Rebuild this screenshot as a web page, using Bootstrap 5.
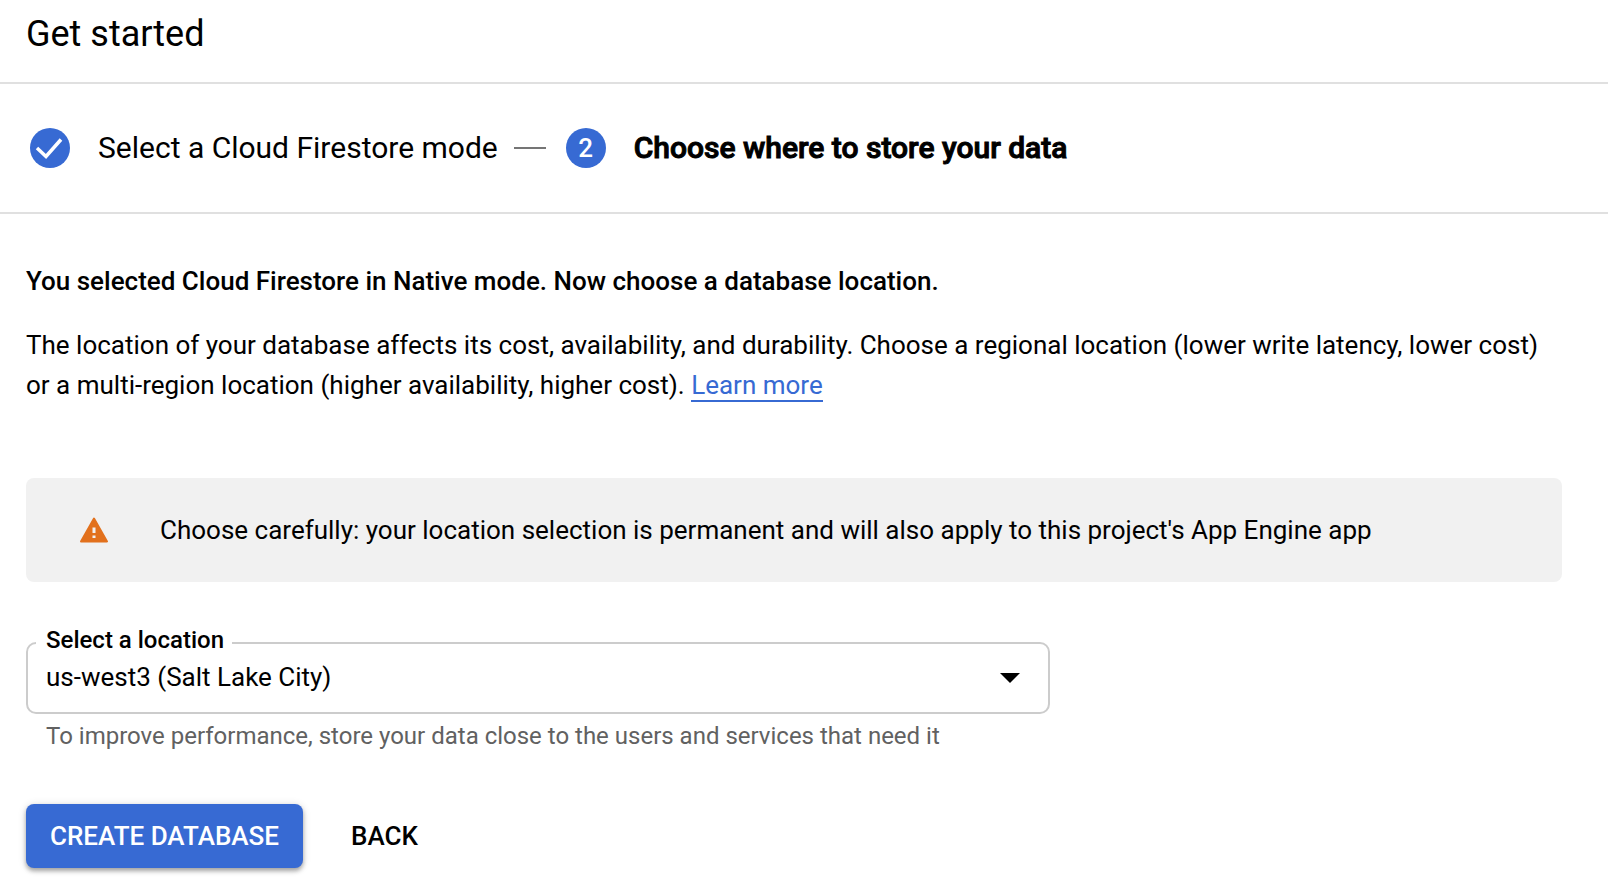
<!DOCTYPE html>
<html lang="en">
<head>
<meta charset="utf-8">
<meta name="viewport" content="width=device-width, initial-scale=1">
<title>Get started</title>
<link href="https://cdn.jsdelivr.net/npm/bootstrap@5.3.0/dist/css/bootstrap.min.css" rel="stylesheet">
<style>
  :root { --brand: #376ad3; --rule: #e0e0e0; }
  body { font-family: Roboto, "Liberation Sans", sans-serif; font-size: 26px; line-height: 40px; color: #000; background: #fff; }
  .rule-bottom { border-bottom: 2px solid var(--rule); }
  .page-x { padding-left: 26px; padding-right: 46px; }
  .page-title { font-size: 36px; line-height: 40px; padding-top: 14px; padding-bottom: 28px; }
  .stepper { padding-top: 44px; padding-bottom: 44px; padding-left: 30px; font-size: 30px; }
  .step-dot { width: 40px; height: 40px; flex: none; border-radius: 50%; background: var(--brand); color: #fff; font-size: 26px; font-weight: 500; }
  .step-label { margin-left: 28px; }
  .step-current { font-weight: 500; -webkit-text-stroke: 1px #000; }
  .step-link { width: 32px; height: 2px; background: #757575; margin-left: 16px; margin-right: 20px; }
  .intro { padding-top: 47px; }
  .intro-title { font-size: 26px; line-height: 40px; font-weight: 500; margin-bottom: 24px; }
  .more-link { color: var(--brand); text-decoration: none; border-bottom: 2px solid var(--brand); }
  .notice { background: #f1f1f1; border-radius: 8px; padding: 32px 54px; margin-top: 73px; margin-bottom: 60px; gap: 52px; }
  .notice svg { width: 28px; height: 26px; flex: none; }
  .location-label { position: absolute; left: 10px; top: -18px; padding: 0 8px 0 10px; background: #fff; font-size: 24px; line-height: 32px; font-weight: 500; }
  .location-select { height: 72px; border: 2px solid #ccc; border-radius: 10px; padding: 0 64px 2px 18px; font-size: 26px; line-height: 40px; color: #000;
    background-color: #fff; background-position: right 28px center; background-size: 20px 10px;
    background-image: url("data:image/svg+xml,%3Csvg xmlns='http://www.w3.org/2000/svg' viewBox='0 0 20 10'%3E%3Cpath d='M0 0h20L10 10z'/%3E%3C/svg%3E"); }
  .helper { font-size: 24px; line-height: 32px; color: #616161; padding-left: 20px; margin-top: 6px; }
  .actions { margin-top: 52px; padding-bottom: 28px; gap: 24px; }
  .action-btn { font-size: 26px; line-height: 40px; font-weight: 500; padding: 12px 24px; border: 0; border-radius: 8px; color: #000; }
  .action-main, .action-main:hover { color: #fff; background: var(--brand); box-shadow: 0 3px 4px rgba(0,0,0,.3), 0 1px 8px rgba(0,0,0,.14); }
</style>
</head>
<body>
<header class="rule-bottom">
  <h1 class="page-title page-x fw-normal m-0">Get started</h1>
</header>
<nav class="rule-bottom" aria-label="Progress">
  <ol class="stepper list-unstyled d-flex flex-wrap align-items-center m-0">
    <li class="d-flex align-items-center">
      <span class="step-dot d-flex align-items-center justify-content-center">
        <svg width="40" height="40" viewBox="0 0 40 40" fill="none" stroke="#fff" stroke-width="3.500" aria-hidden="true"><path d="M7 20l9 8.500L31 11.500"/></svg>
      </span>
      <span class="step-label">Select a Cloud Firestore mode</span>
      <span class="step-link"></span>
    </li>
    <li class="d-flex align-items-center" aria-current="step">
      <span class="step-dot d-flex align-items-center justify-content-center">2</span>
      <span class="step-label step-current">Choose where to store your data</span>
    </li>
  </ol>
</nav>
<main class="page-x">
  <section class="intro">
    <h2 class="intro-title">You selected Cloud Firestore in Native mode. Now choose a database location.</h2>
    <p class="m-0">The location of your database affects its cost, availability, and durability. Choose a regional location (lower write latency, lower cost) or a multi-region location (higher availability, higher cost). <a href="#" class="more-link">Learn more</a></p>
  </section>
  <div class="notice d-flex align-items-center" role="alert">
    <svg viewBox="0 0 28 26" aria-hidden="true"><path d="M14 1.500L27 24.500H1z" fill="#e2711d" stroke="#e2711d" stroke-width="2" stroke-linejoin="round"/><path d="M12.500 10.500h3v5.500h-3zM12.500 18.500h3V21h-3z" fill="#f1f1f1"/></svg>
    <span>Choose carefully: your location selection is permanent and will also apply to this project's App Engine app</span>
  </div>
  <form>
    <div class="row g-0">
      <div class="col-12 col-md-8">
        <div class="position-relative">
          <select class="form-select location-select" id="location" aria-describedby="locationHelp">
            <option selected>us-west3 (Salt Lake City)</option>
          </select>
          <label class="location-label" for="location">Select a location</label>
        </div>
        <div class="helper" id="locationHelp">To improve performance, store your data close to the users and services that need it</div>
      </div>
    </div>
    <div class="actions d-flex flex-wrap">
      <button type="button" class="btn action-btn action-main">CREATE DATABASE</button>
      <button type="button" class="btn action-btn">BACK</button>
    </div>
  </form>
</main>
<script src="https://cdn.jsdelivr.net/npm/bootstrap@5.3.0/dist/js/bootstrap.bundle.min.js"></script>
</body>
</html>
